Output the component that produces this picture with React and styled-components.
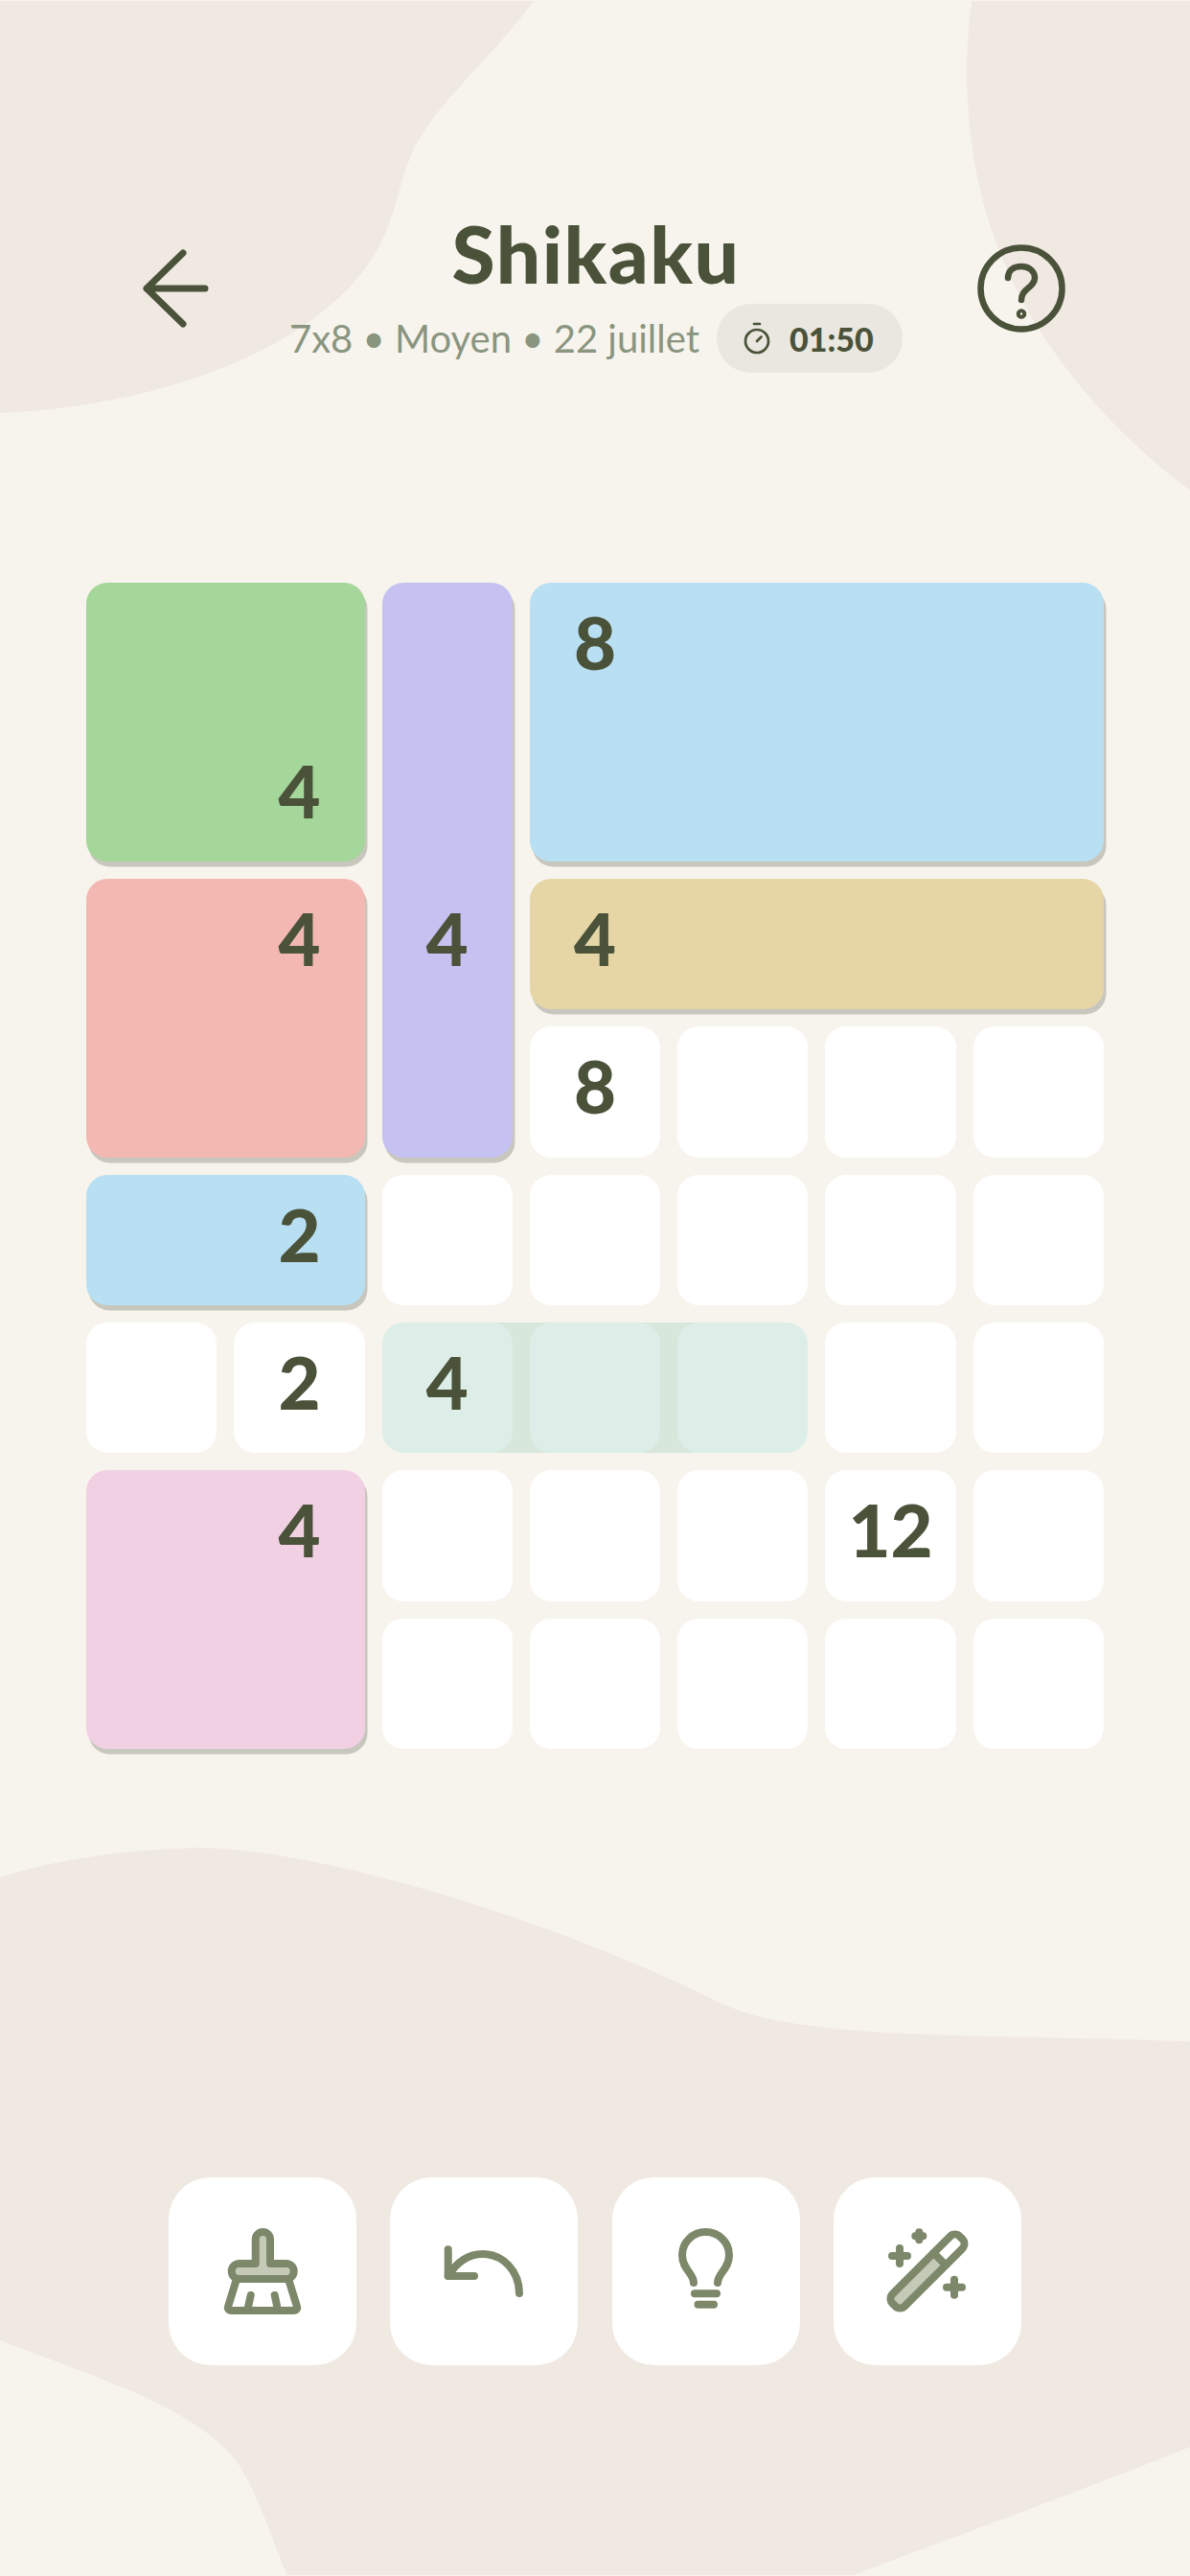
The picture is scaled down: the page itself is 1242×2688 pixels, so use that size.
import React from "react";
import styled, { createGlobalStyle } from "styled-components";
import { Timer } from "lucide-react";

const INK = "#4a5239";
const SAGE = "#7d8769";
const SAGE_LIGHT = "#c5cab8";

const GlobalStyle = createGlobalStyle`
  html, body {
    margin: 0;
    padding: 0;
    background: #f7f4ed;
  }
`;

const Page = styled.div`
  position: relative;
  width: 1242px;
  height: 2688px;
  overflow: hidden;
  display: flex;
  flex-direction: column;
  align-items: center;
  background: #f7f4ed;
  font-family: "Lato", "Noto Sans", sans-serif;
  color: ${INK};
`;

const Blobs = styled.svg`
  position: absolute;
  top: 0;
  left: 0;
  width: 1242px;
  height: 2688px;
  fill: #f0e9e2;
`;

const Header = styled.header`
  position: relative;
  box-sizing: border-box;
  width: 100%;
  height: 608px;
  padding: 222px 128px 0 136px;
  display: flex;
  justify-content: space-between;
  align-items: flex-start;
`;

const HeaderButton = styled.svg`
  width: 96px;
  height: 96px;
  margin-top: 31px;
  fill: none;
  stroke: ${INK};
  stroke-linecap: round;
  stroke-linejoin: round;
`;

const TitleBlock = styled.div`
  display: flex;
  flex-direction: column;
  align-items: center;
`;

const Title = styled.h1`
  margin: 0 6px 0 0;
  font-size: 82px;
  line-height: 84px;
  font-weight: 900;
  letter-spacing: 1.5px;
`;

const SubRow = styled.div`
  display: flex;
  align-items: center;
  gap: 18px;
  margin: 11px 6px 0 0;
`;

const SubText = styled.span`
  font-size: 40px;
  color: #8a9580;
  white-space: nowrap;
`;

const TimerPill = styled.div`
  display: flex;
  align-items: center;
  gap: 16px;
  box-sizing: border-box;
  width: 194px;
  height: 72px;
  padding-left: 24px;
  border-radius: 36px;
  background: #e9e7df;
  font-size: 34px;
  font-weight: 900;
`;

const Board = styled.main`
  position: relative;
  width: 1062px;
  display: grid;
  grid-template-columns: repeat(7, 1fr);
  grid-auto-rows: 136.375px;
  gap: 18px;
`;

const Cell = styled.div`
  grid-column: ${(p) => p.$col};
  grid-row: ${(p) => p.$row};
  display: flex;
  align-items: center;
  justify-content: center;
  border-radius: 22px;
  background: #fff;
`;

const Region = styled.div`
  grid-column: ${(p) => p.$col} / span ${(p) => p.$w};
  grid-row: ${(p) => p.$row} / span ${(p) => p.$h};
  display: grid;
  grid-template-columns: repeat(${(p) => p.$w}, 1fr);
  grid-auto-rows: 136.375px;
  gap: 18px;
  border-radius: 22px;
  background: ${(p) => p.$color};
  box-shadow: 2.5px 5.5px 0 #c8c7bd;
`;

const Selection = styled.div`
  grid-column: ${(p) => p.$col} / span ${(p) => p.$w};
  grid-row: ${(p) => p.$row};
  z-index: 1;
  border-radius: 22px;
  background: rgba(168, 213, 196, 0.4);
`;

const Clue = styled.span`
  grid-column: ${(p) => p.$col};
  grid-row: ${(p) => p.$row};
  align-self: center;
  justify-self: center;
  z-index: 2;
  font-size: 76px;
  line-height: 1;
  font-weight: 900;
  transform: translateY(-6px);
`;

const Toolbar = styled.nav`
  position: relative;
  margin-top: 447px;
  display: flex;
  gap: 35.3px;
`;

const ToolButton = styled.button`
  width: 196px;
  height: 196px;
  padding: 0;
  border: 0;
  border-radius: 44px;
  background: #fff;
  display: flex;
  align-items: center;
  justify-content: center;
`;

const ToolIcon = styled.svg`
  width: 96px;
  height: 96px;
  fill: none;
  stroke: ${SAGE};
  stroke-width: 8;
  stroke-linecap: round;
  stroke-linejoin: round;
`;

const regions = [
  { col: 1, row: 1, w: 2, h: 2, color: "#a5d69a", clue: [2, 2, 4] },
  { col: 3, row: 1, w: 1, h: 4, color: "#c5c2f1", clue: [1, 3, 4] },
  { col: 4, row: 1, w: 4, h: 2, color: "#b8dff2", clue: [1, 1, 8] },
  { col: 1, row: 3, w: 2, h: 2, color: "#f3b8b2", clue: [2, 1, 4] },
  { col: 4, row: 3, w: 4, h: 1, color: "#e6d6a6", clue: [1, 1, 4] },
  { col: 1, row: 5, w: 2, h: 1, color: "#b8dff2", clue: [2, 1, 2] },
  { col: 1, row: 7, w: 2, h: 2, color: "#f1d0e4", clue: [2, 1, 4] },
];

// free cells, row -> first column, with the clues that sit in them
const freeRows = [
  { row: 4, from: 4 },
  { row: 5, from: 3 },
  { row: 6, from: 1 },
  { row: 7, from: 3 },
  { row: 8, from: 3 },
];

const clues = { "4-4": 8, "6-2": 2, "6-3": 4, "7-6": 12 };

const cells = freeRows.flatMap(({ row, from }) =>
  Array.from({ length: 8 - from }, (_, i) => ({ row, col: from + i }))
);

const BroomIcon = () => (
  <ToolIcon viewBox="0 0 96 96">
    <path
      fill={SAGE_LIGHT}
      d="M40.7 40V14.7a7.65 7.65 0 0 1 15.3 0V40H72.7a8 8 0 0 1 8 8a8 8 0 0 1-8 8H23.7a8 8 0 0 1-8-8a8 8 0 0 1 8-8Z"
    />
    <path d="M21 56L12 85a3 3 0 0 0 3 4H81a3 3 0 0 0 3-4L75 56" />
    <path d="M35.7 73L32.3 88.7M60.7 73L64 88.7" />
  </ToolIcon>
);

const UndoIcon = () => (
  <ToolIcon viewBox="0 0 96 96">
    <path d="M10.7 25.3V53H38" />
    <path d="M10.7 53C20 38 33 30 47 30C68 30 85 48 85 71" />
  </ToolIcon>
);

const BulbIcon = () => (
  <ToolIcon viewBox="0 0 96 96">
    <path d="M35 60C35 50 23 46 23 31A24.5 24 0 0 1 72 31C72 46 60 50 60 60" />
    <path d="M36 71.3H59M39.5 82.7H56" />
  </ToolIcon>
);

const WandIcon = () => (
  <ToolIcon viewBox="0 0 96 96">
    <g transform="rotate(-45 48 48)">
      <rect x="-1.5" y="39" width="67.5" height="18" fill={SAGE_LIGHT} stroke="none" />
      <rect x="-1.5" y="39" width="99" height="18" rx="7" />
      <path d="M66 39V57" />
    </g>
    <path d="M19 24V40M11 32H27M76 56.7V72.7M68 64.7H84M39.3 7.3V15.3M35.3 11.3H43.3" />
  </ToolIcon>
);

export default function App() {
  return (
    <Page>
      <GlobalStyle />
      <Blobs viewBox="0 0 725 1568">
        <path d="M0 0H325C300 35 262 65 250 95C240 120 240 145 215 172C170 222 80 248 0 251Z" />
        <path d="M592 0C585 50 590 110 612 160C635 215 680 265 725 298V0Z" />
        <path d="M0 1143C40 1130 90 1125 125 1125C200 1127 340 1170 440 1220C490 1243 600 1238 725 1243V1490C650 1520 580 1545 520 1568H175C165 1545 158 1520 145 1500C120 1465 50 1445 0 1425Z" />
      </Blobs>

      <Header>
        <HeaderButton viewBox="0 0 96 96" strokeWidth="7">
          <path d="M55 11L17 48L55 85M17 48H78" />
        </HeaderButton>
        <TitleBlock>
          <Title>Shikaku</Title>
          <SubRow>
            <SubText>7x8 • Moyen • 22 juillet</SubText>
            <TimerPill>
              <Timer size={36} strokeWidth={1.8} />
              01:50
            </TimerPill>
          </SubRow>
        </TitleBlock>
        <HeaderButton viewBox="0 0 96 96" strokeWidth="6.5">
          <circle cx="48" cy="48" r="42.5" />
          <path d="M34 37C34 29 40 25 48 25C56 25 62 30 62 37C62 47 48 48 48 60" />
          <circle cx="48" cy="74.5" r="2" />
        </HeaderButton>
      </Header>

      <Board>
        {regions.map((r) => (
          <Region key={`${r.col}-${r.row}`} $col={r.col} $row={r.row} $w={r.w} $h={r.h} $color={r.color}>
            <Clue $col={r.clue[0]} $row={r.clue[1]}>{r.clue[2]}</Clue>
          </Region>
        ))}
        {cells.map(({ row, col }) => (
          <Cell key={`${row}-${col}`} $col={col} $row={row}>
            {clues[`${row}-${col}`] && <Clue>{clues[`${row}-${col}`]}</Clue>}
          </Cell>
        ))}
        <Selection $col={3} $row={6} $w={3} />
      </Board>

      <Toolbar>
        <ToolButton><BroomIcon /></ToolButton>
        <ToolButton><UndoIcon /></ToolButton>
        <ToolButton><BulbIcon /></ToolButton>
        <ToolButton><WandIcon /></ToolButton>
      </Toolbar>
    </Page>
  );
}
